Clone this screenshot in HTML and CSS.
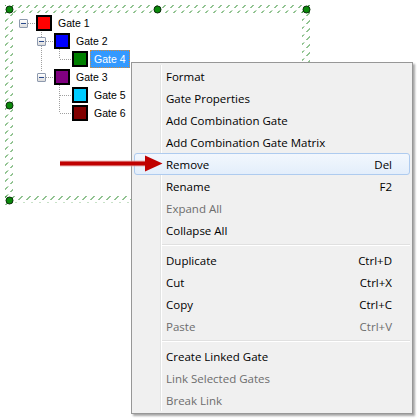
FILE: index.html
```html
<!DOCTYPE html>
<html>
<head>
<meta charset="utf-8">
<link rel="stylesheet" href="styles.css">
</head>
<body>
<div class="canvas">
  <svg class="selection" width="418" height="419" viewBox="0 0 418 419">
    <defs>
      <pattern id="hatch" width="8" height="8" patternUnits="userSpaceOnUse" x="1" y="1">
        <path d="M1.5 7 L7 1.5" stroke="#0a7a0a" stroke-width="0.9"/>
      </pattern>
    </defs>
    <rect x="5" y="5" width="305" height="8" fill="url(#hatch)"/>
    <rect x="5" y="5" width="8" height="200" fill="url(#hatch)"/>
    <rect x="302" y="5" width="8" height="200" fill="url(#hatch)"/>
    <rect x="5" y="196" width="305" height="7" fill="url(#hatch)"/>
    <g fill="#0a8a0a" stroke="#0b2a0b" stroke-width="1">
      <circle cx="9.5" cy="9.5" r="3.5"/>
      <circle cx="157.5" cy="9.5" r="3.5"/>
      <circle cx="306.5" cy="9.5" r="3.5"/>
      <circle cx="9.5" cy="105.5" r="3.5"/>
      <circle cx="9.5" cy="200.5" r="3.5"/>
    </g>
  </svg>
  <svg class="connectors" width="140" height="130" viewBox="0 0 140 130">
    <g stroke="#a0a0a0" stroke-width="1" stroke-dasharray="1 1" shape-rendering="crispEdges">
      <path d="M28 23.5 H36"/>
      <path d="M41.5 28 V72"/>
      <path d="M46 41.5 H54"/>
      <path d="M46 77.5 H54"/>
      <path d="M59.5 49 V59 M59.5 59.5 H72"/>
      <path d="M59.5 85 V113 M59.5 95.5 H72 M59.5 113.5 H72"/>
    </g>
  </svg>
  <ul class="tree">
    <li class="row lvl0"><span class="slot"><span class="exp"></span></span><span class="sw red"></span><span class="lbl">Gate 1</span></li>
    <li class="row lvl1"><span class="slot"><span class="exp"></span></span><span class="sw blue"></span><span class="lbl">Gate 2</span></li>
    <li class="row lvl2"><span class="slot"></span><span class="sw green"></span><span class="lbl sel">Gate 4</span></li>
    <li class="row lvl1"><span class="slot"><span class="exp"></span></span><span class="sw purple"></span><span class="lbl">Gate 3</span></li>
    <li class="row lvl2"><span class="slot"></span><span class="sw cyan"></span><span class="lbl">Gate 5</span></li>
    <li class="row lvl2"><span class="slot"></span><span class="sw maroon"></span><span class="lbl">Gate 6</span></li>
  </ul>
  <div class="menu">
    <div class="item">Format</div>
    <div class="item">Gate Properties</div>
    <div class="item">Add Combination Gate</div>
    <div class="item">Add Combination Gate Matrix</div>
    <div class="item hot"><span>Remove</span><span class="key">Del</span></div>
    <div class="item"><span>Rename</span><span class="key">F2</span></div>
    <div class="item off">Expand All</div>
    <div class="item">Collapse All</div>
    <div class="sep"></div>
    <div class="item"><span>Duplicate</span><span class="key">Ctrl+D</span></div>
    <div class="item"><span>Cut</span><span class="key">Ctrl+X</span></div>
    <div class="item"><span>Copy</span><span class="key">Ctrl+C</span></div>
    <div class="item off"><span>Paste</span><span class="key">Ctrl+V</span></div>
    <div class="sep"></div>
    <div class="item">Create Linked Gate</div>
    <div class="item off">Link Selected Gates</div>
    <div class="item off">Break Link</div>
  </div>
  <svg class="arrow" width="170" height="30" viewBox="0 0 170 30">
    <rect x="60" y="5.5" width="88" height="6" fill="#e3a0a0" opacity="0.7"/>
    <rect x="60" y="6.5" width="88" height="4" fill="#c00000"/>
    <polygon points="145,0.5 162.5,8.5 145,16.5" fill="#c00000"/>
  </svg>
</div>
</body>
</html>
```
FILE: styles.css
```css
html, body {
  margin: 0;
  padding: 0;
  background: #ffffff;
}
.canvas {
  position: relative;
  width: 418px;
  height: 419px;
  overflow: hidden;
  font-family: "Liberation Sans", Arial, sans-serif;
}
.selection {
  position: absolute;
  left: 0;
  top: 0;
}
.connectors {
  position: absolute;
  left: 0;
  top: 0;
}
.tree {
  position: relative;
  list-style: none;
  margin: 0;
  padding: 14px 0 0 14px;
  font-size: 10.5px;
  color: #000;
}
.row {
  display: flex;
  align-items: center;
  height: 18px;
}
.lvl1 { margin-left: 18px; }
.lvl2 { margin-left: 36px; }
.slot {
  width: 18px;
  height: 18px;
  display: flex;
  align-items: center;
  padding-left: 5px;
  box-sizing: border-box;
}
.exp {
  position: relative;
  width: 9px;
  height: 9px;
  box-sizing: border-box;
  border: 1px solid #8e9aae;
  border-radius: 1px;
  background: linear-gradient(#ffffff, #dcdcdc);
}
.exp::after {
  content: "";
  position: absolute;
  left: 1px;
  top: 3px;
  width: 5px;
  height: 1px;
  background: #2a4a8c;
}
.sw {
  width: 16px;
  height: 16px;
  box-sizing: border-box;
  border: 2px solid #000;
  margin-left: 4px;
}
.red { background: #ff0000; }
.blue { background: #0000ff; }
.green { background: #008000; }
.purple { background: #800080; }
.cyan { background: #00ccff; }
.maroon { background: #800000; }
.lbl {
  margin-left: 2px;
  padding: 0 3px;
  line-height: 16px;
  border: 1px solid transparent;
}
.lbl.sel {
  background: #3399ff;
  color: #ffffff;
  border: 1px dotted #d08a40;
}
.arrow {
  position: absolute;
  left: 0;
  top: 155px;
}
.menu {
  position: absolute;
  left: 131px;
  top: 62px;
  width: 282px;
  box-sizing: border-box;
  padding: 2px;
  background: #f0f0f0;
  border: 1px solid #979797;
  box-shadow: 2px 2px 2px rgba(0, 0, 0, 0.35);
  font-family: "Open Sans", "Noto Sans", sans-serif;
  font-size: 11.5px;
  color: #000;
}
.menu::before {
  content: "";
  position: absolute;
  left: 28px;
  top: 2px;
  bottom: 2px;
  width: 1px;
  background: #e2e3e3;
  box-shadow: 1px 0 0 #ffffff;
}
.item {
  position: relative;
  display: flex;
  justify-content: space-between;
  align-items: center;
  height: 22px;
  box-sizing: border-box;
  padding: 0 17px 0 31px;
  border: 1px solid transparent;
  border-radius: 3px;
}
.item.hot {
  border-color: #aecbef;
  background: linear-gradient(#f2f7fd, #e3eefb);
}
.item.off {
  color: #6d6d6d;
}
.sep {
  position: relative;
  height: 8px;
  margin-left: 28px;
}
.sep::after {
  content: "";
  position: absolute;
  left: 0;
  right: 0;
  top: 3px;
  height: 1px;
  background: #e0e0e0;
  box-shadow: 0 1px 0 #ffffff;
}
```
